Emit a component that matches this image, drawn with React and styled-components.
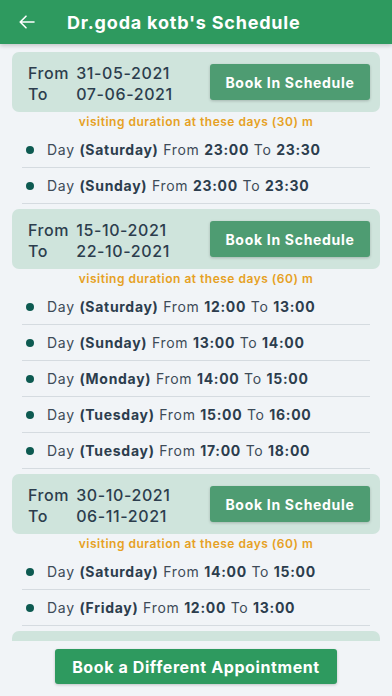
import React from 'react';
import styled, { createGlobalStyle } from 'styled-components';

const GlobalStyle = createGlobalStyle`
  html, body {
    margin: 0;
    padding: 0;
    background: #f1f4f7;
    font-family: Inter, "Open Sans", sans-serif;
  }
`;

const Screen = styled.div`
  display: flex;
  flex-direction: column;
  width: 392px;
  height: 696px;
  overflow: hidden;
  background: #f1f4f7;
`;

const Header = styled.header`
  display: flex;
  align-items: center;
  height: 44px;
  flex-shrink: 0;
  padding: 0 0 0 17px;
  background: #2e9a5f;
  box-shadow: 0 2px 4px rgba(0, 0, 0, 0.18);
  position: relative;
  z-index: 2;
`;

const BackButton = styled.button`
  display: flex;
  align-items: center;
  justify-content: center;
  width: 20px;
  height: 20px;
  padding: 0;
  border: 0;
  background: none;
  color: #fff;
`;

const Title = styled.h1`
  margin: 0 0 0 30px;
  font-size: 18px;
  font-weight: 700;
  letter-spacing: 0.8px;
  color: #fff;
`;

const Scroll = styled.main`
  flex: 1;
  overflow: hidden;
  padding: 8px 12px 0;
`;

const Card = styled.section`
  display: flex;
  align-items: center;
  justify-content: space-between;
  height: 60px;
  box-sizing: border-box;
  margin-top: ${(p) => (p.$first ? '0' : '5px')};
  padding: 0 10px 0 16px;
  background: #cfe4dc;
  border-radius: 7px;
`;

const Range = styled.div`
  display: grid;
  grid-template-columns: auto auto;
  column-gap: 7px;
  margin-top: 3px;
  font-size: 16px;
  line-height: 21px;
  font-weight: 500;
  letter-spacing: 0.6px;
  color: #2c3d4d;
`;

const BookButton = styled.button`
  width: 160px;
  height: 36px;
  border: 0;
  border-radius: 3px;
  background: #4e9c72;
  box-shadow: 0 1px 3px rgba(0, 0, 0, 0.2);
  color: #fff;
  font-family: inherit;
  font-size: 14px;
  font-weight: 700;
  letter-spacing: 0.7px;
`;

const Duration = styled.p`
  margin: 3px 0 3px;
  text-align: center;
  font-size: 12px;
  line-height: 14px;
  font-weight: 600;
  letter-spacing: 0.5px;
  color: #e6a124;
`;

const SlotList = styled.ul`
  list-style: none;
  margin: 0;
  padding: 0 10px;
`;

const Slot = styled.li`
  display: flex;
  align-items: center;
  height: 36px;
  box-sizing: border-box;
  border-bottom: 1px solid #d5dbe0;
  padding-left: 4px;
  font-size: 14px;
  letter-spacing: 0.7px;
  color: #3d4b58;

  &::before {
    content: "";
    width: 8px;
    height: 8px;
    border-radius: 50%;
    background: #0d5a51;
    margin-right: 13px;
  }

  b {
    font-weight: 700;
    color: #2c3d4d;
  }

  span {
    white-space: pre;
  }
`;

const PeekCard = styled.div`
  height: 20px;
  margin-top: 5px;
  background: #cfe4dc;
  border-radius: 7px 7px 0 0;
`;

const Footer = styled.footer`
  display: flex;
  justify-content: center;
  align-items: flex-start;
  height: 55px;
  flex-shrink: 0;
  padding-top: 8px;
  box-sizing: border-box;
  background: #f1f4f7;
`;

const MainButton = styled.button`
  width: 282px;
  height: 35px;
  border: 0;
  border-radius: 3px;
  background: #2e9a5f;
  box-shadow: 0 1px 3px rgba(0, 0, 0, 0.2);
  color: #fff;
  font-family: inherit;
  font-size: 16px;
  font-weight: 700;
  letter-spacing: 0.6px;
`;

const schedules = [
  {
    from: '31-05-2021',
    to: '07-06-2021',
    minutes: 30,
    slots: [
      ['Saturday', '23:00', '23:30'],
      ['Sunday', '23:00', '23:30'],
    ],
  },
  {
    from: '15-10-2021',
    to: '22-10-2021',
    minutes: 60,
    slots: [
      ['Saturday', '12:00', '13:00'],
      ['Sunday', '13:00', '14:00'],
      ['Monday', '14:00', '15:00'],
      ['Tuesday', '15:00', '16:00'],
      ['Tuesday', '17:00', '18:00'],
    ],
  },
  {
    from: '30-10-2021',
    to: '06-11-2021',
    minutes: 60,
    slots: [
      ['Saturday', '14:00', '15:00'],
      ['Friday', '12:00', '13:00'],
    ],
  },
];

const App = () => (
  <>
    <GlobalStyle />
    <Screen>
      <Header>
        <BackButton aria-label="Back">
          <svg width="16" height="14" viewBox="0 0 16 14" fill="none" stroke="#fff" strokeWidth="1.6" strokeLinecap="round" strokeLinejoin="round">
            <path d="M15 7H1.5M7 1.2 1.2 7 7 12.8" />
          </svg>
        </BackButton>
        <Title>Dr.goda kotb's Schedule</Title>
      </Header>
      <Scroll>
        {schedules.map((s, i) => (
          <div key={s.from}>
            <Card $first={i === 0}>
              <Range>
                <span>From</span>
                <span>{s.from}</span>
                <span>To</span>
                <span>{s.to}</span>
              </Range>
              <BookButton>Book In Schedule</BookButton>
            </Card>
            <Duration>visiting duration at these days ({s.minutes}) m</Duration>
            <SlotList>
              {s.slots.map(([day, start, end], j) => (
                <Slot key={j}>
                  <span>Day </span>
                  <b>({day})</b>
                  <span> From </span>
                  <b>{start}</b>
                  <span> To </span>
                  <b>{end}</b>
                </Slot>
              ))}
            </SlotList>
          </div>
        ))}
        <PeekCard />
      </Scroll>
      <Footer>
        <MainButton>Book a Different Appointment</MainButton>
      </Footer>
    </Screen>
  </>
);

export default App;
